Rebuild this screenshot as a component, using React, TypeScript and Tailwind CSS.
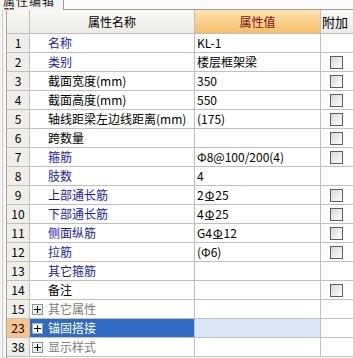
import React from "react";

type Row = {
  n: string;
  name: string;
  color: "blue" | "black" | "grey" | "sel";
  v: string;
  cb: boolean;
  tree?: boolean;
};

const R = "Φ";

const rows: Row[] = [
  { n: "1", name: "名称", color: "blue", v: "KL-1", cb: false },
  { n: "2", name: "类别", color: "blue", v: "楼层框架梁", cb: true },
  { n: "3", name: "截面宽度(mm)", color: "black", v: "350", cb: true },
  { n: "4", name: "截面高度(mm)", color: "black", v: "550", cb: true },
  { n: "5", name: "轴线距梁左边线距离(mm)", color: "black", v: "(175)", cb: true },
  { n: "6", name: "跨数量", color: "black", v: "", cb: true },
  { n: "7", name: "箍筋", color: "blue", v: "Φ8@100/200(4)", cb: true },
  { n: "8", name: "肢数", color: "blue", v: "4", cb: false },
  { n: "9", name: "上部通长筋", color: "blue", v: "2R25", cb: true },
  { n: "10", name: "下部通长筋", color: "blue", v: "4R25", cb: true },
  { n: "11", name: "侧面纵筋", color: "blue", v: "G4R12", cb: true },
  { n: "12", name: "拉筋", color: "blue", v: "(Φ6)", cb: true },
  { n: "13", name: "其它箍筋", color: "blue", v: "", cb: false },
  { n: "14", name: "备注", color: "black", v: "", cb: true },
  { n: "15", name: "其它属性", color: "grey", v: "", cb: false, tree: true },
  { n: "23", name: "锚固搭接", color: "sel", v: "", cb: false, tree: true },
  { n: "38", name: "显示样式", color: "grey", v: "", cb: false, tree: true },
];

function Val({ text }: { text: string }) {
  const parts = text.split("R");
  return (
    <>
      {parts.map((p, i) => (
        <React.Fragment key={i}>
          {i > 0 && (
            <span className="inline-block border-b border-[#222] leading-[11px] mx-[1px]">{R}</span>
          )}
          {p}
        </React.Fragment>
      ))}
    </>
  );
}

function Check() {
  return (
    <div className="w-[13px] h-[13px] border border-[#55606c] bg-gradient-to-br from-[#d8d8d2] to-[#ffffff]" />
  );
}

function PlusBox({ sel }: { sel: boolean }) {
  return (
    <div
      className={`w-[11px] h-[11px] border ${sel ? "border-[#9aa6b6] bg-white" : "border-[#8c96a0] bg-gradient-to-br from-white to-[#e4e4de]"} flex items-center justify-center relative`}
    >
      <div className="absolute w-[7px] h-px bg-black" />
      <div className="absolute h-[7px] w-px bg-black" />
    </div>
  );
}

export default function App() {
  return (
    <div className="w-[353px] h-[358px] overflow-hidden bg-white text-[12px] font-['Noto_Sans_CJK_SC',sans-serif] text-black">
      {/* tab strip */}
      <div className="flex h-[10px]">
        <div className="w-[64px] bg-[#f4f4f2] border-r border-[#9c9c9c] overflow-hidden">
          <div className="leading-[12px] -mt-[5px] pl-[3px] text-[12px] text-[#222] tracking-[1px]">属性编辑器</div>
        </div>
        <div className="flex-1 bg-[#fbfbfb] border-b border-[#9c9c9c]" />
      </div>
      <div className="flex">
        {/* left frame */}
        <div className="w-[7px] h-[348px] bg-[#f4f4f2] border-r border-[#a8a8a8] pl-[2px]">
          <div className="h-full w-px bg-[#cfcfcf]" />
        </div>
        <div className="flex-1 flex flex-col">
          {/* header */}
          <div className="flex h-[24px] border-b border-[#c0c0c0]">
            <div className="w-[23px] border-r border-[#c0c0c0] bg-gradient-to-b from-[#f8f8f5] to-[#ecebe5]" />
            <div className="w-[165px] border-r border-[#c0c0c0] bg-gradient-to-b from-[#f8f8f5] to-[#ecebe5] flex items-center justify-center text-[12px]">
              属性名称
            </div>
            <div className="w-[126px] border-r border-[#c0c0c0] bg-gradient-to-b from-[#fde2ae] to-[#f6bf66] flex items-center justify-center text-[12px] text-[#7a1010]">
              属性值
            </div>
            <div className="flex-1 bg-gradient-to-b from-[#f8f8f5] to-[#ecebe5] flex items-center pl-[1px] text-[13px] whitespace-nowrap">
              附加
            </div>
          </div>
          {rows.map((r) => {
            const sel = r.color === "sel";
            const nameColor =
              r.color === "blue"
                ? "text-[#1a1ab0]"
                : r.color === "grey"
                ? "text-[#7c7c7c]"
                : r.color === "sel"
                ? "text-white"
                : "text-black";
            return (
              <div key={r.n} className="flex h-[19px] border-b border-[#c0c0c0]">
                <div
                  className={`w-[23px] border-r border-[#c0c0c0] flex items-center justify-center ${sel ? "bg-[#f8c48c]" : "bg-[#efeee8]"}`}
                >
                  {r.n}
                </div>
                <div
                  className={`w-[165px] border-r border-[#c0c0c0] flex items-center whitespace-nowrap ${nameColor} ${sel ? "bg-[#316ac5]" : ""} ${r.tree ? "pl-[2px]" : "pl-[18px]"}`}
                >
                  {r.tree && (
                    <div className="mr-[5px]">
                      <PlusBox sel={sel} />
                    </div>
                  )}
                  {r.name}
                </div>
                <div
                  className={`w-[126px] border-r border-[#c0c0c0] flex items-center pl-[2px] whitespace-nowrap ${sel ? "bg-[#dde6f6]" : ""}`}
                >
                  <Val text={r.v} />
                </div>
                <div className="flex-1 flex items-center pl-[9px]">{r.cb && <Check />}</div>
              </div>
            );
          })}
        </div>
      </div>
    </div>
  );
}
